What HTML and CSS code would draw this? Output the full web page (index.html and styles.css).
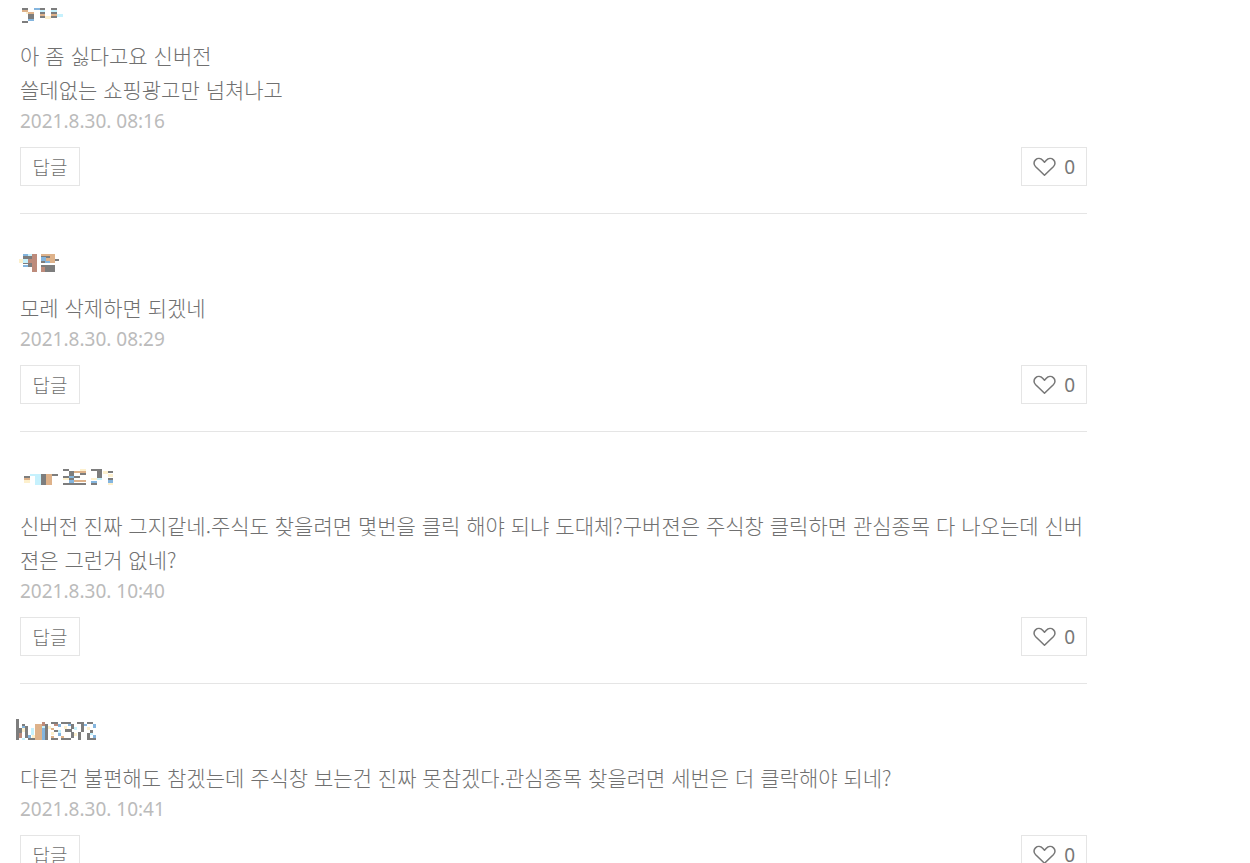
FILE: index.html
```html
<!DOCTYPE html>
<html lang="ko">
<head>
<meta charset="utf-8">
<meta name="viewport" content="width=device-width, initial-scale=1">
<title>댓글</title>
<link rel="stylesheet" href="styles.css">
</head>
<body>
<svg class="defs" aria-hidden="true">
  <symbol id="heart" viewBox="0 0 24 20">
    <path d="M12 18.6 2.8 9.8C.6 7.6.5 4.400 2.600 2.500 4.800.5 8.100.8 10.100 2.900L12 5l1.900-2.100c2-2.100 5.300-2.400 7.500-.4 2.100 1.900 2 5.100-.2 7.300z" fill="none" stroke="#777" stroke-width="1.600" stroke-linejoin="round"/>
  </symbol>
</svg>
<main class="comments">
  <article class="comment">
    <svg class="name" viewBox="30 0 360 72" role="img" aria-label="작성자">
      <path class="dark" d="M36 24h18v6h-18zM54 42h18v15h-18zM36 63h18v6h-18zM90 24h15v6h-15zM90 36h15v6h-15zM90 48h15v6h-15zM122 24h18v6h-18zM122 36h18v6h-18zM122 48h18v6h-18z"/>
      <path class="tan" d="M36 30h18v6h-18zM54 36h18v6h-18zM90 42h15v6h-15zM122 42h18v6h-18z"/>
      <path class="blue" d="M72 24h18v6h-18zM54 57h18v6h-18z"/>
      <path class="cyan" d="M90 30h15v6h-15zM122 30h18v6h-18zM140 42h19v9h-19z"/>
      <path class="cream" d="M105 48h17v8h-17zM48 36h6v6h-6z"/>
    </svg>
    <p class="text">아 좀 싫다고요 신버전<br>쓸데없는 쇼핑광고만 넘쳐나고</p>
    <time class="date" datetime="2021-08-30T08:16">2021.8.30. 08:16</time>
    <div class="actions">
      <button class="btn reply" type="button">답글</button>
      <button class="btn like" type="button" aria-label="좋아요 0"><svg class="heart"><use href="#heart"/></svg><span>0</span></button>
    </div>
  </article>

  <article class="comment">
    <svg class="name" viewBox="30 15 360 78" role="img" aria-label="작성자">
      <path class="dark" d="M39 33h27v8h-27zM54 54h12v13h-12zM93 33h27v7h-27zM93 48h12v6h-12zM93 60h42v6h-42zM105 66h30v15h-30zM135 42h12v6h-12zM39 54h15v4h-15z"/>
      <path class="rust" d="M66 27h15v54h-15zM93 66h12v15h-12zM54 41h12v13h-12z"/>
      <path class="tan" d="M93 27h42v6h-42zM120 33h15v21h-15zM108 40h12v8h-12z"/>
      <path class="blue" d="M39 27h15v6h-15zM93 36h15v12h-15zM105 48h15v6h-15zM39 60h15v6h-15z"/>
      <path class="cyan" d="M54 27h12v6h-12zM39 41h15v13h-15z"/>
      <path class="cream" d="M27 42h12v12h-12z"/>
    </svg>
    <p class="text">모레 삭제하면 되겠네</p>
    <time class="date" datetime="2021-08-30T08:29">2021.8.30. 08:29</time>
    <div class="actions">
      <button class="btn reply" type="button">답글</button>
      <button class="btn like" type="button" aria-label="좋아요 0"><svg class="heart"><use href="#heart"/></svg><span>0</span></button>
    </div>
  </article>

  <article class="comment">
    <svg class="name" viewBox="30 24 360 78" role="img" aria-label="작성자">
      <path class="dark" d="M42 48h18v6h-18zM92 42h16v33h-16zM126 42h18v6h-18zM159 27h18v6h-18zM177 33h15v14h-15zM159 47h18v7h-18zM177 54h15v7h-15zM159 69h69v6h-69zM210 39h18v6h-18zM192 48h18v6h-18zM243 27h33v6h-33zM261 33h15v21h-15zM294 33h15v6h-15zM294 54h15v6h-15zM243 69h18v6h-18z"/>
      <path class="tan" d="M108 42h18v33h-18zM192 33h36v6h-36zM192 60h36v6h-36zM42 54h18v6h-18z"/>
      <path class="blue" d="M177 48h15v6h-15zM177 61h15v8h-15zM243 63h18v6h-18zM294 60h15v9h-15z"/>
      <path class="cyan" d="M60 42h16v6h-16zM76 42h16v33h-16zM261 54h15v6h-15z"/>
      <path class="cream" d="M42 60h18v9h-18zM159 54h18v6h-18zM210 27h18v6h-18zM280 33h14v9h-14zM294 42h15v9h-15zM243 54h18v6h-18zM294 69h15v6h-15z"/>
    </svg>
    <p class="text">신버전 진짜 그지같네.주식도 찾을려면 몇번을 클릭 해야 되냐 도대체?구버젼은 주식창 클릭하면 관심종목 다 나오는데 신버젼은 그런거 없네?</p>
    <time class="date" datetime="2021-08-30T10:40">2021.8.30. 10:40</time>
    <div class="actions">
      <button class="btn reply" type="button">답글</button>
      <button class="btn like" type="button" aria-label="좋아요 0"><svg class="heart"><use href="#heart"/></svg><span>0</span></button>
    </div>
  </article>

  <article class="comment">
    <svg class="name" viewBox="30 30 360 78" role="img" aria-label="작성자">
      <path class="dark" d="M18 27h9v63h-9zM27 54h9v15h-9zM36 42h9v6h-9zM45 48h9v36h-9zM54 84h21v6h-21zM105 42h9v48h-9zM123 36h21v6h-21zM132 60h12v6h-12zM123 84h21v6h-21zM153 36h30v6h-30zM183 42h9v15h-9zM165 57h20v9h-20zM183 66h9v18h-9zM153 84h30v6h-30zM201 36h21v6h-21zM213 42h9v24h-9zM204 66h9v24h-9zM231 36h18v6h-18zM240 60h9v9h-9zM231 69h9v21h-9zM240 84h18v6h-18z"/>
      <path class="rust" d="M27 69h9v15h-9zM96 36h9v12h-9zM132 42h12v6h-12z"/>
      <path class="tan" d="M75 42h21v48h-21zM123 54h9v6h-9zM123 78h9v6h-9zM153 78h9v6h-9z"/>
      <path class="blue" d="M36 48h9v6h-9zM54 75h9v9h-9zM96 54h9v36h-9zM144 42h9v9h-9zM144 69h9v9h-9zM174 42h9v6h-9zM222 42h9v6h-9zM249 42h9v12h-9zM249 75h9v9h-9z"/>
      <path class="cyan" d="M36 84h9v6h-9zM63 54h9v21h-9zM96 48h9v6h-9zM144 60h9v9h-9zM192 51h9v9h-9zM240 69h9v6h-9z"/>
      <path class="cream" d="M36 54h9v12h-9zM66 75h9v9h-9zM114 48h9v9h-9zM123 66h9v9h-9zM162 48h9v9h-9zM192 69h9v9h-9zM231 51h9v9h-9z"/>
    </svg>
    <p class="text">다른건 불편해도 참겠는데 주식창 보는건 진짜 못참겠다.관심종목 찾을려면 세번은 더 클락해야 되네?</p>
    <time class="date" datetime="2021-08-30T10:41">2021.8.30. 10:41</time>
    <div class="actions">
      <button class="btn reply" type="button">답글</button>
      <button class="btn like" type="button" aria-label="좋아요 0"><svg class="heart"><use href="#heart"/></svg><span>0</span></button>
    </div>
  </article>
</main>
</body>
</html>
```
FILE: styles.css
```css
* {
  box-sizing: border-box;
}

body {
  margin: 0;
  height: 100vh;
  overflow: hidden;
  background: #fff;
  color: #707070;
  font-family: "Noto Sans CJK KR", sans-serif;
  font-weight: 300;
}

.defs {
  position: absolute;
  width: 0;
  height: 0;
}

.comments {
  margin: 0 163px 0 20px;
}

.comment {
  padding: 36px 0 27px;
  border-bottom: 1px solid #e5e5e5;
}

.comment:first-child {
  padding-top: 0;
}

.name {
  display: block;
  width: 120px;
  height: 26px;
  margin-bottom: 14px;
  overflow: visible;
  shape-rendering: crispEdges;
}

.comment:first-child .name {
  height: 24px;
}

.dark { fill: #7d7d7d; }
.rust { fill: #bd8b7b; }
.tan { fill: #deb28a; }
.blue { fill: #84b5de; }
.cyan { fill: #c6f1fd; }
.cream { fill: #fdf0cd; }

.text {
  margin: 0 0 1px;
  font-size: 21px;
  line-height: 34px;
  word-break: break-all;
}

.date {
  display: block;
  color: #bbb;
  font-family: "Noto Sans", sans-serif;
  font-weight: 400;
  font-size: 19px;
  line-height: 28px;
}

.actions {
  display: flex;
  justify-content: space-between;
  margin-top: 12px;
}

.btn {
  display: flex;
  align-items: center;
  justify-content: center;
  height: 39px;
  padding: 0 11px;
  border: 1px solid #e5e5e5;
  background: #fff;
  color: inherit;
  font: inherit;
  font-size: 19px;
  line-height: 28px;
}

.reply {
  min-width: 60px;
}

.like {
  gap: 8px;
  color: #777;
  font-family: "Noto Sans", sans-serif;
  font-weight: 400;
}

.heart {
  width: 23px;
  height: 20px;
}
```
